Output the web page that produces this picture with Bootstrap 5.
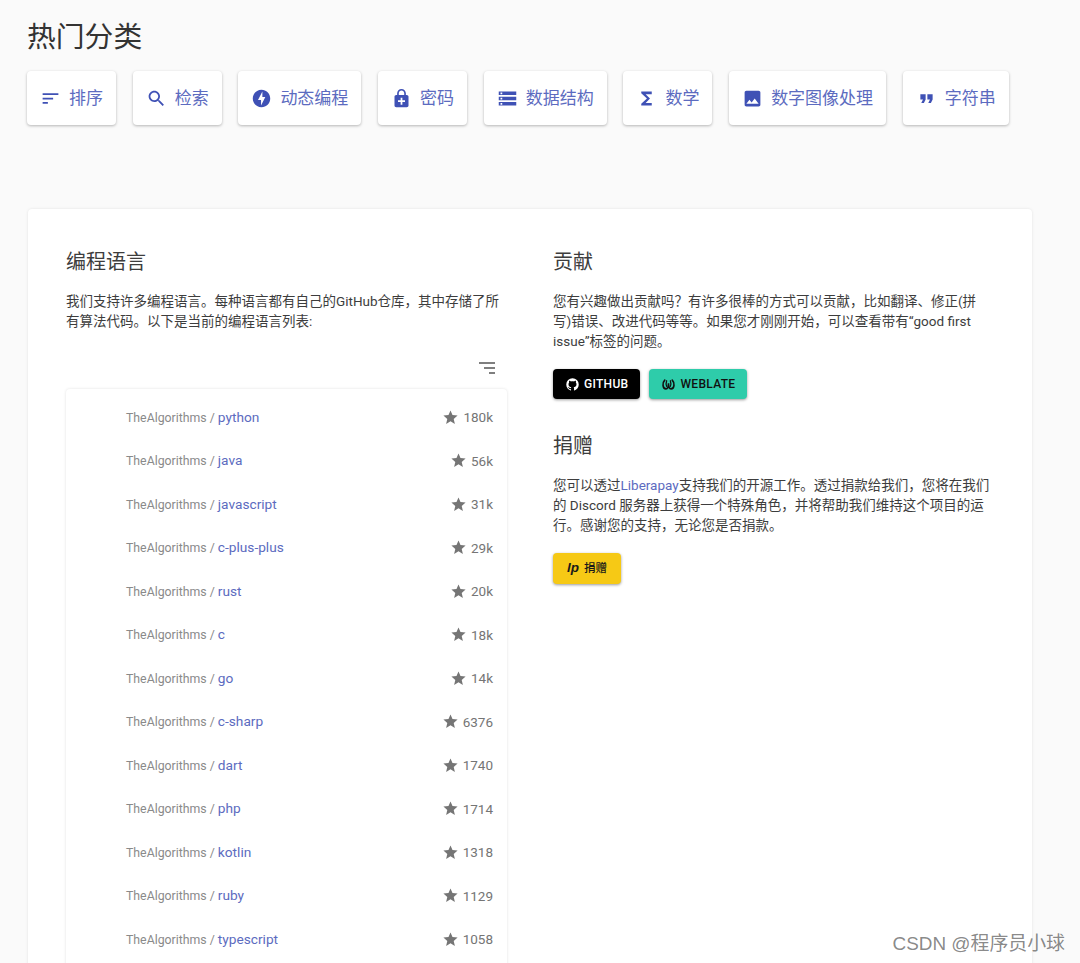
<!DOCTYPE html>
<html lang="zh-CN">
<head>
    <meta charset="UTF-8">
    <meta name="viewport" content="width=device-width, initial-scale=1.0">
    <title>TheAlgorithms</title>
    <link href="https://cdn.jsdelivr.net/npm/bootstrap@5.3.2/dist/css/bootstrap.min.css" rel="stylesheet">
    <style>
        html, body {
            height: 963px;
            overflow: hidden;
        }
        body {
            background-color: #fafafa;
            color: #3d3d3d;
            font-family: Roboto, "Noto Sans CJK SC", sans-serif;
            font-size: 13.5px;
            line-height: 20px;
        }
        .page-wrap {
            padding: 17px 0 0 27px;
        }
        .page-title {
            font-size: 28.8px;
            line-height: 40px;
            font-weight: 400;
            color: #333;
            margin: 0 0 14px;
        }
        .cat-row {
            gap: 16.7px;
        }
        .cat-btn {
            display: flex;
            flex: none;
            align-items: center;
            gap: 8px;
            height: 54px;
            padding: 1px 13px 0 13px;
            background: #fff;
            color: #5c6bc0;
            border: 0;
            border-radius: 4px;
            font-size: 17px;
            white-space: nowrap;
            box-shadow: 0 1px 3px rgba(0, 0, 0, .28);
        }
        .cat-btn svg {
            width: 21px;
            height: 21px;
            fill: #3f51b5;
        }
        .main-sheet {
            margin-top: 84px;
            margin-left: 1px;
            width: 1004px;
            height: 760px;
            padding: 39px 38px 0;
            border: 0;
            border-radius: 4px;
            box-shadow: 0 0 3px rgba(0, 0, 0, .1);
        }
        .sheet-row {
            --bs-gutter-x: 46px;
        }
        .sec-title {
            font-size: 20px;
            line-height: 28px;
            font-weight: 400;
            color: #3d3d3d;
            margin: 0 0 15px;
        }
        .sec-text {
            margin: 0 0 18px;
        }
        .sec-text a {
            color: #5c6bc0;
            text-decoration: none;
        }
        .filter-bar {
            height: 20px;
            margin-top: 27px;
            padding-right: 12px;
        }
        .repo-box {
            margin-top: 10.5px;
            padding-top: 7px;
            height: 600px;
            background: #fff;
            border-radius: 4px;
            box-shadow: 0 0 3px rgba(0, 0, 0, .12);
        }
        .repo-row {
            height: 43.5px;
            padding: 0 14px 0 60px;
        }
        .repo-owner {
            color: #8a8a8a;
            font-size: 12.3px;
        }
        .repo-name {
            color: #5c6bc0;
            text-decoration: none;
            font-size: 13.7px;
        }
        .repo-stars {
            gap: 4px;
            color: #757575;
            font-size: 13.5px;
        }
        .repo-stars svg {
            width: 17px;
            height: 17px;
            fill: #757575;
        }
        .act-row {
            gap: 9px;
        }
        .act-btn {
            display: inline-flex;
            align-items: center;
            gap: 4px;
            height: 30px;
            padding: 0 12px;
            border: 0;
            border-radius: 4px;
            font-size: 12px;
            font-weight: 500;
            letter-spacing: .3px;
            box-shadow: 0 1px 3px rgba(0, 0, 0, .4);
        }
        .act-btn svg {
            width: 15px;
            height: 15px;
        }
        .btn-github {
            background: #000;
            color: #fff;
        }
        .btn-weblate {
            background: #2eccaa;
            color: #111;
        }
        .btn-donate {
            background: #f6c915;
            color: #1a1a1a;
            height: 31px;
            gap: 5px;
            letter-spacing: 0;
            padding: 0 14px;
            font-size: 11.5px;
        }
        .lp-mark {
            font-family: "Liberation Sans", sans-serif;
            font-style: italic;
            font-weight: 700;
            font-size: 13.5px;
        }
        .donate-title {
            margin-top: 33px;
        }
        .mark-text {
            position: absolute;
            right: 15px;
            bottom: 7px;
            color: rgba(70, 70, 70, .65);
            font-family: "Liberation Sans", "Noto Sans CJK SC", sans-serif;
            font-size: 18.9px;
            line-height: 24px;
        }
    </style>
</head>
<body>
    <div class="page-wrap">
        <h1 class="page-title">热门分类</h1>
        <!-- categorias -->
        <div class="d-flex cat-row">
            <button type="button" class="btn cat-btn"><svg viewBox="0 0 24 24"><path d="M3 18h6v-2H3v2zM3 6v2h18V6H3zm0 7h12v-2H3v2z"/></svg>排序</button>
            <button type="button" class="btn cat-btn"><svg viewBox="0 0 24 24"><path d="M15.5 14h-.79l-.28-.27C15.41 12.59 16 11.11 16 9.5 16 5.91 13.09 3 9.5 3S3 5.91 3 9.5 5.91 16 9.5 16c1.61 0 3.09-.59 4.23-1.57l.27.28v.79l5 4.99L20.49 19l-4.99-5zm-6 0C7.01 14 5 11.99 5 9.5S7.01 5 9.5 5 14 7.01 14 9.5 11.99 14 9.5 14z"/></svg>检索</button>
            <button type="button" class="btn cat-btn"><svg viewBox="0 0 24 24"><path d="M12 2.02c-5.51 0-9.98 4.47-9.98 9.98s4.47 9.98 9.98 9.98 9.98-4.47 9.98-9.98S17.51 2.02 12 2.02zM11.48 20v-6.26H8L13 4v6.26h3.35L11.48 20z"/></svg>动态编程</button>
            <button type="button" class="btn cat-btn"><svg viewBox="0 0 24 24"><path d="M18 8h-1V6c0-2.76-2.24-5-5-5S7 3.24 7 6v2H6c-1.1 0-2 .9-2 2v10c0 1.1.9 2 2 2h12c1.1 0 2-.9 2-2V10c0-1.1-.9-2-2-2zM8.9 6c0-1.71 1.39-3.1 3.1-3.1s3.1 1.39 3.1 3.1v2H8.9V6zM16 16h-3v3h-2v-3H8v-2h3v-3h2v3h3v2z"/></svg>密码</button>
            <button type="button" class="btn cat-btn"><svg viewBox="0 0 24 24"><path d="M2 20h20v-4H2v4zm2-3h2v2H4v-2zM2 4v4h20V4H2zm4 3H4V5h2v2zm-4 7h20v-4H2v4zm2-3h2v2H4v-2z"/></svg>数据结构</button>
            <button type="button" class="btn cat-btn"><svg viewBox="0 0 24 24"><path d="M18 4H6v2l6.5 6L6 18v2h12v-3h-7l5-5-5-5h7z"/></svg>数学</button>
            <button type="button" class="btn cat-btn"><svg viewBox="0 0 24 24"><path d="M21 19V5c0-1.1-.9-2-2-2H5c-1.1 0-2 .9-2 2v14c0 1.1.9 2 2 2h14c1.1 0 2-.9 2-2zM8.5 13.5l2.5 3.01L14.5 12l4.5 6H5l3.5-4.5z"/></svg>数字图像处理</button>
            <button type="button" class="btn cat-btn"><svg viewBox="0 0 24 24"><path d="M6 17h3l2-4V7H5v6h3zm8 0h3l2-4V7h-6v6h3z"/></svg>字符串</button>
        </div>

        <div class="card main-sheet">
            <div class="row sheet-row">
                <!-- lenguajes -->
                <div class="col-6">
                    <h2 class="sec-title">编程语言</h2>
                    <p class="sec-text">我们支持许多编程语言。每种语言都有自己的GitHub仓库，其中存储了所有算法代码。以下是当前的编程语言列表:</p>
                    <div class="filter-bar d-flex justify-content-end align-items-center">
                        <svg width="16" height="12" viewBox="0 0 16 12"><path d="M0 1h16M5 6h11M10 11h6" stroke="#555" stroke-width="1.5" fill="none"/></svg>
                    </div>
                    <div class="repo-box">
                        <div class="repo-row d-flex justify-content-between align-items-center"><span><span class="repo-owner">TheAlgorithms / </span><a class="repo-name" href="#">python</a></span><span class="repo-stars d-flex align-items-center"><svg viewBox="0 0 24 24"><path d="M12 17.27L18.18 21l-1.64-7.03L22 9.24l-7.19-.61L12 2 9.19 8.63 2 9.24l5.46 4.73L5.82 21z"/></svg>180k</span></div>
                        <div class="repo-row d-flex justify-content-between align-items-center"><span><span class="repo-owner">TheAlgorithms / </span><a class="repo-name" href="#">java</a></span><span class="repo-stars d-flex align-items-center"><svg viewBox="0 0 24 24"><path d="M12 17.27L18.18 21l-1.64-7.03L22 9.24l-7.19-.61L12 2 9.19 8.63 2 9.24l5.46 4.73L5.82 21z"/></svg>56k</span></div>
                        <div class="repo-row d-flex justify-content-between align-items-center"><span><span class="repo-owner">TheAlgorithms / </span><a class="repo-name" href="#">javascript</a></span><span class="repo-stars d-flex align-items-center"><svg viewBox="0 0 24 24"><path d="M12 17.27L18.18 21l-1.64-7.03L22 9.24l-7.19-.61L12 2 9.19 8.63 2 9.24l5.46 4.73L5.82 21z"/></svg>31k</span></div>
                        <div class="repo-row d-flex justify-content-between align-items-center"><span><span class="repo-owner">TheAlgorithms / </span><a class="repo-name" href="#">c-plus-plus</a></span><span class="repo-stars d-flex align-items-center"><svg viewBox="0 0 24 24"><path d="M12 17.27L18.18 21l-1.64-7.03L22 9.24l-7.19-.61L12 2 9.19 8.63 2 9.24l5.46 4.73L5.82 21z"/></svg>29k</span></div>
                        <div class="repo-row d-flex justify-content-between align-items-center"><span><span class="repo-owner">TheAlgorithms / </span><a class="repo-name" href="#">rust</a></span><span class="repo-stars d-flex align-items-center"><svg viewBox="0 0 24 24"><path d="M12 17.27L18.18 21l-1.64-7.03L22 9.24l-7.19-.61L12 2 9.19 8.63 2 9.24l5.46 4.73L5.82 21z"/></svg>20k</span></div>
                        <div class="repo-row d-flex justify-content-between align-items-center"><span><span class="repo-owner">TheAlgorithms / </span><a class="repo-name" href="#">c</a></span><span class="repo-stars d-flex align-items-center"><svg viewBox="0 0 24 24"><path d="M12 17.27L18.18 21l-1.64-7.03L22 9.24l-7.19-.61L12 2 9.19 8.63 2 9.24l5.46 4.73L5.82 21z"/></svg>18k</span></div>
                        <div class="repo-row d-flex justify-content-between align-items-center"><span><span class="repo-owner">TheAlgorithms / </span><a class="repo-name" href="#">go</a></span><span class="repo-stars d-flex align-items-center"><svg viewBox="0 0 24 24"><path d="M12 17.27L18.18 21l-1.64-7.03L22 9.24l-7.19-.61L12 2 9.19 8.63 2 9.24l5.46 4.73L5.82 21z"/></svg>14k</span></div>
                        <div class="repo-row d-flex justify-content-between align-items-center"><span><span class="repo-owner">TheAlgorithms / </span><a class="repo-name" href="#">c-sharp</a></span><span class="repo-stars d-flex align-items-center"><svg viewBox="0 0 24 24"><path d="M12 17.27L18.18 21l-1.64-7.03L22 9.24l-7.19-.61L12 2 9.19 8.63 2 9.24l5.46 4.73L5.82 21z"/></svg>6376</span></div>
                        <div class="repo-row d-flex justify-content-between align-items-center"><span><span class="repo-owner">TheAlgorithms / </span><a class="repo-name" href="#">dart</a></span><span class="repo-stars d-flex align-items-center"><svg viewBox="0 0 24 24"><path d="M12 17.27L18.18 21l-1.64-7.03L22 9.24l-7.19-.61L12 2 9.19 8.63 2 9.24l5.46 4.73L5.82 21z"/></svg>1740</span></div>
                        <div class="repo-row d-flex justify-content-between align-items-center"><span><span class="repo-owner">TheAlgorithms / </span><a class="repo-name" href="#">php</a></span><span class="repo-stars d-flex align-items-center"><svg viewBox="0 0 24 24"><path d="M12 17.27L18.18 21l-1.64-7.03L22 9.24l-7.19-.61L12 2 9.19 8.63 2 9.24l5.46 4.73L5.82 21z"/></svg>1714</span></div>
                        <div class="repo-row d-flex justify-content-between align-items-center"><span><span class="repo-owner">TheAlgorithms / </span><a class="repo-name" href="#">kotlin</a></span><span class="repo-stars d-flex align-items-center"><svg viewBox="0 0 24 24"><path d="M12 17.27L18.18 21l-1.64-7.03L22 9.24l-7.19-.61L12 2 9.19 8.63 2 9.24l5.46 4.73L5.82 21z"/></svg>1318</span></div>
                        <div class="repo-row d-flex justify-content-between align-items-center"><span><span class="repo-owner">TheAlgorithms / </span><a class="repo-name" href="#">ruby</a></span><span class="repo-stars d-flex align-items-center"><svg viewBox="0 0 24 24"><path d="M12 17.27L18.18 21l-1.64-7.03L22 9.24l-7.19-.61L12 2 9.19 8.63 2 9.24l5.46 4.73L5.82 21z"/></svg>1129</span></div>
                        <div class="repo-row d-flex justify-content-between align-items-center"><span><span class="repo-owner">TheAlgorithms / </span><a class="repo-name" href="#">typescript</a></span><span class="repo-stars d-flex align-items-center"><svg viewBox="0 0 24 24"><path d="M12 17.27L18.18 21l-1.64-7.03L22 9.24l-7.19-.61L12 2 9.19 8.63 2 9.24l5.46 4.73L5.82 21z"/></svg>1058</span></div>
                    </div>
                </div>
                <!-- contribuir y donar -->
                <div class="col-6">
                    <h2 class="sec-title">贡献</h2>
                    <p class="sec-text">您有兴趣做出贡献吗？有许多很棒的方式可以贡献，比如翻译、修正(拼写)错误、改进代码等等。如果您才刚刚开始，可以查看带有“good first issue”标签的问题。</p>
                    <div class="d-flex act-row">
                        <button type="button" class="btn act-btn btn-github"><svg viewBox="0 0 24 24" fill="#fff"><path d="M12 2A10 10 0 0 0 2 12c0 4.42 2.87 8.17 6.84 9.5.5.08.66-.23.66-.5v-1.69c-2.77.6-3.36-1.34-3.36-1.34-.46-1.16-1.11-1.47-1.11-1.47-.91-.62.07-.6.07-.6 1 .07 1.53 1.03 1.53 1.03.87 1.52 2.34 1.07 2.91.83.09-.65.35-1.09.63-1.34-2.22-.25-4.55-1.11-4.55-4.92 0-1.11.38-2 1.03-2.71-.1-.25-.45-1.29.1-2.64 0 0 .84-.27 2.75 1.02.79-.22 1.65-.33 2.5-.33.85 0 1.71.11 2.5.33 1.91-1.29 2.75-1.02 2.75-1.02.55 1.35.2 2.39.1 2.64.65.71 1.03 1.6 1.03 2.71 0 3.82-2.34 4.66-4.57 4.91.36.31.69.92.69 1.85V21c0 .27.16.59.67.5C19.14 20.16 22 16.42 22 12A10 10 0 0 0 12 2z"/></svg>GITHUB</button>
                        <button type="button" class="btn act-btn btn-weblate"><svg viewBox="0 0 24 24" fill="none" stroke="#111" stroke-width="2.6" stroke-linecap="round"><path d="M6 5C2 9 2 19 8 19c3 0 4-5 4-9 0 4 1 9 4 9 6 0 6-10 2-14"/><path d="M9 6c-1 3-1 6 0 9M15 6c1 3 1 6 0 9" stroke-width="2"/></svg>WEBLATE</button>
                    </div>
                    <h2 class="sec-title donate-title">捐赠</h2>
                    <p class="sec-text">您可以透过<a href="#">Liberapay</a>支持我们的开源工作。透过捐款给我们，您将在我们的 Discord 服务器上获得一个特殊角色，并将帮助我们维持这个项目的运行。感谢您的支持，无论您是否捐款。</p>
                    <button type="button" class="btn act-btn btn-donate"><span class="lp-mark">lp</span>捐赠</button>
                </div>
            </div>
        </div>
    </div>
    <div class="mark-text">CSDN @程序员小球</div>
    <script src="https://cdn.jsdelivr.net/npm/bootstrap@5.3.2/dist/js/bootstrap.bundle.min.js"></script>
</body>
</html>
